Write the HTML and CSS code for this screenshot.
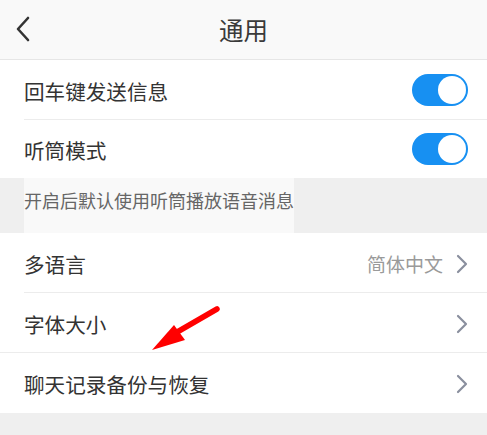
FILE: index.html
```html
<!DOCTYPE html>
<html lang="zh">
<head>
<meta charset="utf-8">
<link rel="stylesheet" href="styles.css">
</head>
<body>
<div class="page">
  <header class="nav">
    <svg class="back" width="14" height="26" viewBox="0 0 14 26"><path d="M12 2 L2 13 L12 24" fill="none" stroke="#333" stroke-width="2.6" stroke-linecap="round" stroke-linejoin="round"/></svg>
    <div class="title">通用</div>
  </header>
  <section class="group">
    <div class="row bordered">
      <span class="label">回车键发送信息</span>
      <span class="switch"><span class="knob"></span></span>
    </div>
    <div class="row short">
      <span class="label">听筒模式</span>
      <span class="switch"><span class="knob"></span></span>
    </div>
  </section>
  <div class="hint"><span class="hint-text">开启后默认使用听筒播放语音消息</span></div>
  <section class="group">
    <div class="row bordered">
      <span class="label">多语言</span>
      <span class="right"><span class="value">简体中文</span><svg class="chev" width="12" height="20" viewBox="0 0 12 20"><path d="M2 2 L10 10 L2 18" fill="none" stroke="#8a8f9e" stroke-width="2.2" stroke-linecap="round" stroke-linejoin="round"/></svg></span>
    </div>
    <div class="row bordered full">
      <span class="label">字体大小</span>
      <span class="right"><svg class="chev" width="12" height="20" viewBox="0 0 12 20"><path d="M2 2 L10 10 L2 18" fill="none" stroke="#8a8f9e" stroke-width="2.2" stroke-linecap="round" stroke-linejoin="round"/></svg></span>
    </div>
    <div class="row">
      <span class="label">聊天记录备份与恢复</span>
      <span class="right"><svg class="chev" width="12" height="20" viewBox="0 0 12 20"><path d="M2 2 L10 10 L2 18" fill="none" stroke="#8a8f9e" stroke-width="2.2" stroke-linecap="round" stroke-linejoin="round"/></svg></span>
    </div>
  </section>
  <div class="footer-gray"></div>
  <svg class="arrow" width="487" height="435" viewBox="0 0 487 435">
    <line x1="217" y1="309" x2="172" y2="335" stroke="#ff0000" stroke-width="5.5" stroke-linecap="round"/>
    <polygon points="152,350 174,325 185,340" fill="#ff0000"/>
  </svg>
</div>
</body>
</html>
```

FILE: styles.css
```css
* { box-sizing: border-box; }
html, body { margin: 0; padding: 0; }
body {
  background: #efefef;
  font-family: "Noto Sans CJK SC", "Noto Sans", sans-serif;
  color: #333;
}
.page {
  position: relative;
  width: 487px;
  height: 435px;
  overflow: hidden;
  background: #efefef;
}
.nav {
  height: 60px;
  background: #f9f9f9;
  border-bottom: 1px solid #e6e6e6;
  display: flex;
  align-items: center;
  justify-content: center;
  position: relative;
}
.back {
  position: absolute;
  left: 16px;
  top: 16px;
}
.title {
  font-size: 24.5px;
  color: #3a3a3a;
  line-height: 30px;
  margin-top: 1px;
}
.group {
  background: #fff;
}
.row {
  height: 60px;
  display: flex;
  align-items: center;
  justify-content: space-between;
  padding: 0 19px 0 24px;
  position: relative;
}
.row.short { height: 58px; }
.row.bordered::after {
  content: "";
  position: absolute;
  left: 24px;
  right: 0;
  bottom: 0;
  height: 1px;
  background: #ececec;
}
.row.full::after { left: 0; }
.label {
  font-size: 20.6px;
  line-height: 26px;
  color: #333;
  margin-top: 2px;
}
.switch {
  width: 56px;
  height: 32px;
  border-radius: 16px;
  background: #1790f2;
  position: relative;
  display: block;
}
.knob {
  position: absolute;
  right: 2px;
  top: 2px;
  width: 28px;
  height: 28px;
  border-radius: 50%;
  background: #fff;
}
.right {
  display: flex;
  align-items: center;
  gap: 13px;
  margin-top: 2px;
}
.value {
  font-size: 19px;
  color: #9a9a9a;
  line-height: 24px;
}
.chev { display: block; }
.hint {
  height: 55px;
  background: #efefef;
  padding-left: 24px;
  display: flex;
}
.hint-text {
  background: #f9f9f9;
  font-size: 18px;
  line-height: 22px;
  color: #666;
  padding-top: 11px;
  height: 55px;
  display: block;
}
.footer-gray {
  height: 40px;
  background: #efefef;
}
.arrow {
  position: absolute;
  left: 0;
  top: 0;
  pointer-events: none;
}
```
